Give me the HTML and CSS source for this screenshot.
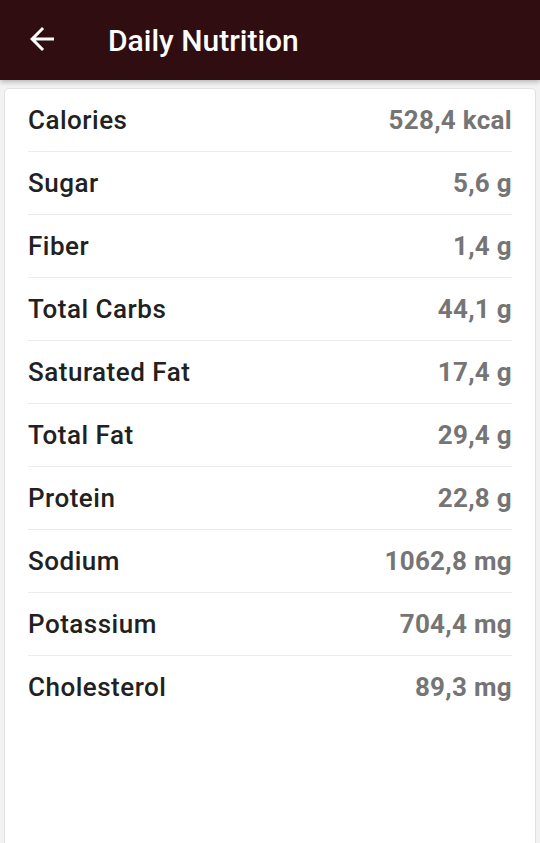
FILE: index.html
```html
<!DOCTYPE html>
<html>
<head>
<meta charset="utf-8">
<link rel="stylesheet" href="styles.css">
</head>
<body>
<header class="appbar">
  <svg class="back" viewBox="0 0 24 24" width="36" height="36"><path d="M20 11H7.83l5.59-5.59L12 4l-8 8 8 8 1.41-1.41L7.83 13H20v-2z" fill="#fff"/></svg>
  <h1 class="title">Daily Nutrition</h1>
</header>
<main class="card">
  <div class="row"><span class="label">Calories</span><span class="value">528,4 kcal</span></div>
  <div class="row"><span class="label">Sugar</span><span class="value">5,6 g</span></div>
  <div class="row"><span class="label">Fiber</span><span class="value">1,4 g</span></div>
  <div class="row"><span class="label">Total Carbs</span><span class="value">44,1 g</span></div>
  <div class="row"><span class="label">Saturated Fat</span><span class="value">17,4 g</span></div>
  <div class="row"><span class="label">Total Fat</span><span class="value">29,4 g</span></div>
  <div class="row"><span class="label">Protein</span><span class="value">22,8 g</span></div>
  <div class="row"><span class="label">Sodium</span><span class="value">1062,8 mg</span></div>
  <div class="row"><span class="label">Potassium</span><span class="value">704,4 mg</span></div>
  <div class="row"><span class="label">Cholesterol</span><span class="value">89,3 mg</span></div>
</main>
</body>
</html>
```
FILE: styles.css
```css
html, body {
  margin: 0;
  padding: 0;
  height: 100%;
}
body {
  background: #f2f2f2;
  font-family: Roboto, "Noto Sans", sans-serif;
  display: flex;
  flex-direction: column;
  overflow: hidden;
}
.appbar {
  height: 80px;
  flex: none;
  background: #2f0d10;
  display: flex;
  align-items: center;
  padding-left: 24px;
  box-shadow: 0 2px 5px rgba(0,0,0,0.25);
  position: relative;
  z-index: 1;
}
.back {
  display: block;
  margin-top: -2px;
}
.title {
  margin: 0 0 0 48px;
  color: #fff;
  font-size: 30px;
  font-weight: 500;
}
.card {
  flex: 1;
  margin: 8px 4px -6px 4px;
  background: #fff;
  border: 1px solid #e2e2e2;
  border-radius: 5px;
  padding: 0 23px 0 23px;
}
.row {
  height: 62px;
  display: flex;
  justify-content: space-between;
  align-items: center;
  border-bottom: 1px solid #ececec;
}
.row:last-child {
  border-bottom: none;
}
.label {
  font-size: 26px;
  font-weight: 500;
  letter-spacing: 0.5px;
  color: #212121;
}
.value {
  font-size: 26px;
  font-weight: 700;
  letter-spacing: 0.3px;
  color: #757575;
}
```
